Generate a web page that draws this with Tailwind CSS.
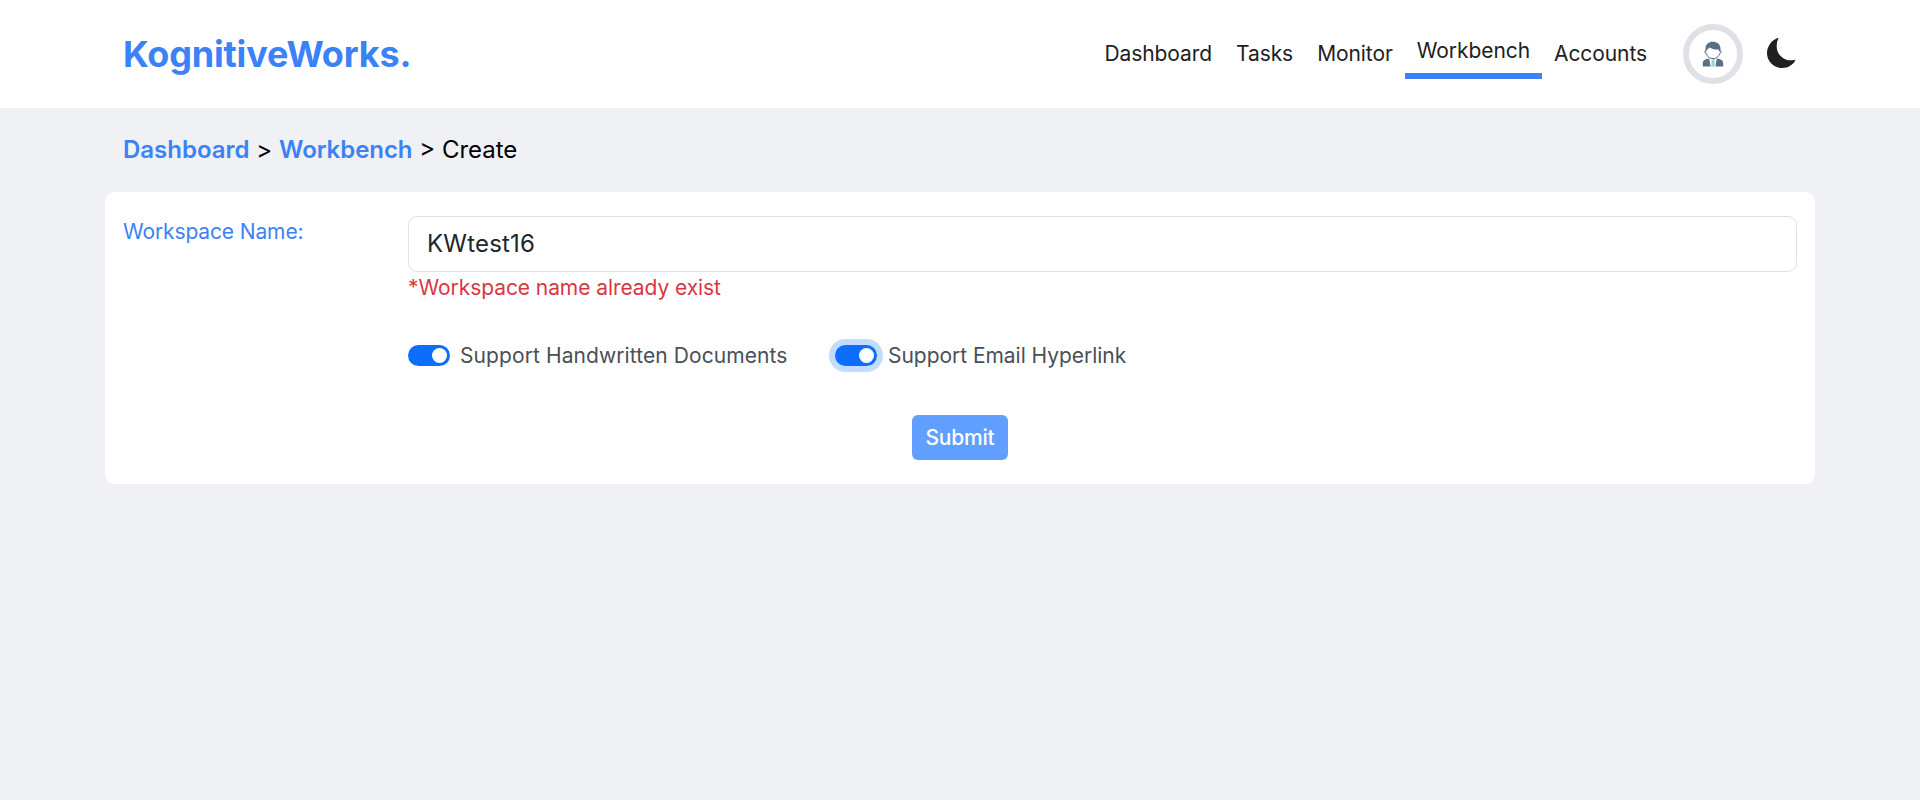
<!DOCTYPE html>
<html lang="en">
<head>
<meta charset="utf-8">
<title>KognitiveWorks</title>
<script src="https://cdn.jsdelivr.net/npm/@tailwindcss/browser@4"></script>
</head>
<body class="h-screen overflow-hidden bg-[#f0f1f5] font-['Inter',sans-serif] text-[21px] font-normal leading-8 text-[#212529]">
<header class="h-[108px] bg-white">
  <div class="mx-auto flex h-full w-[1674px] items-center justify-between">
    <a class="text-[36px] font-bold leading-[54px] tracking-[-0.17px] text-[#3b82f6]">KognitiveWorks.</a>
    <nav class="flex items-center tracking-[-0.08px] text-[#212121]">
      <a class="px-3">Dashboard</a>
      <a class="px-3">Tasks</a>
      <a class="px-3">Monitor</a>
      <a class="border-b-6 border-[#3b82f6] px-3 pb-[6px] pt-[6px]">Workbench</a>
      <a class="px-3">Accounts</a>
      <span class="ml-6 flex size-[60px] items-center justify-center rounded-full border-6 border-[#dee2e6]">
        <svg class="size-[26px]" viewBox="0 0 26 26">
          <path d="M5.800 9.500a1.500 1.500 0 0 0 .5 2.900C7 15.500 9.700 17.600 13 17.600s6-2.100 6.700-5.200a1.500 1.500 0 0 0 .5-2.900" fill="#fff" stroke="#587084" stroke-width="1"/>
          <path d="M5.500 10.500V7.500C5.500 3.200 9 .800 12.500.800c4.500 0 8 2.700 8 6.700v3h-1.200L18.500 8.500C15 8.800 12 8 9.500 6.500 8.500 7.800 7.500 8.500 6.700 9L6.500 10.500z" fill="#587084"/>
          <path d="M2.800 25.500v-3.200c0-3 2.500-4 6.400-4.700l1.400 7.900zM23.200 25.500v-3.200c0-3-2.500-4-6.400-4.700l-1.400 7.900z" fill="#587084"/>
          <path d="M11.600 18.200h2.800l.300 7.300h-3.400z" fill="#9bd5cb"/>
        </svg>
      </span>
      <svg class="mb-[2px] ml-6 size-[30px]" viewBox="0 0 30 30"><path d="M11.500 0A18 18 0 0 0 9.700 8.500C9.700 16 16 22.300 23.500 22.300c1.600 0 3-.1 4.500-.5.400.2.300.7.100 1C25.500 27.400 20.700 30 15.300 30 7 30 0 23.300 0 15.200 0 8.500 4.700 2 10.700.1c.400-.1.700-.1.800-.1z" fill="#212121"/></svg>
    </nav>
  </div>
</header>
<main class="mx-auto w-[1710px]">
  <div class="px-[18px] pb-6 pt-6 text-2xl leading-9 text-black"><a class="font-semibold text-[#3b82f6]">Dashboard</a> &gt; <a class="font-semibold tracking-[-0.05px] text-[#3b82f6]">Workbench</a> <span>&gt; Create</span></div>
  <section class="h-[292px] rounded-[9px] bg-white px-[18px] pt-6">
    <div class="flex">
      <label class="w-[285px] tracking-[-0.13px] text-[#3b82f6]">Workspace Name:</label>
      <div class="flex-1">
        <input class="block h-14 w-full rounded-[9px] border border-[#dee2e6] px-[18px] pb-[2px] text-2xl tracking-[0.2px] text-[#212529]" value="KWtest16">
        <p class="tracking-[-0.07px] text-[#dc3545]">*Workspace name already exist</p>
        <div class="mt-[35px] flex items-center text-[#495057]">
          <span class="flex h-[21px] w-[42px] items-center justify-end rounded-full bg-[#0d6efd] pr-[3px]"><span class="size-[15px] rounded-full bg-white"></span></span>
          <span class="ml-[10px] w-[329px] whitespace-nowrap pt-px tracking-[0.09px]">Support Handwritten Documents</span>
          <span class="ml-[46px] flex h-[21px] w-[42px] items-center justify-end rounded-full bg-[#0d6efd] pr-[3px] ring-6 ring-[#c2dbfe]"><span class="size-[15px] rounded-full bg-white"></span></span>
          <span class="ml-[11px] pt-px tracking-[-0.04px]">Support Email Hyperlink</span>
        </div>
      </div>
    </div>
    <div class="mt-[43px] flex justify-center"><button class="h-[45px] w-24 rounded-[6px] bg-[#609fff] text-[21px] font-medium tracking-[-0.2px] text-white">Submit</button></div>
  </section>
</main>
</body>
</html>
